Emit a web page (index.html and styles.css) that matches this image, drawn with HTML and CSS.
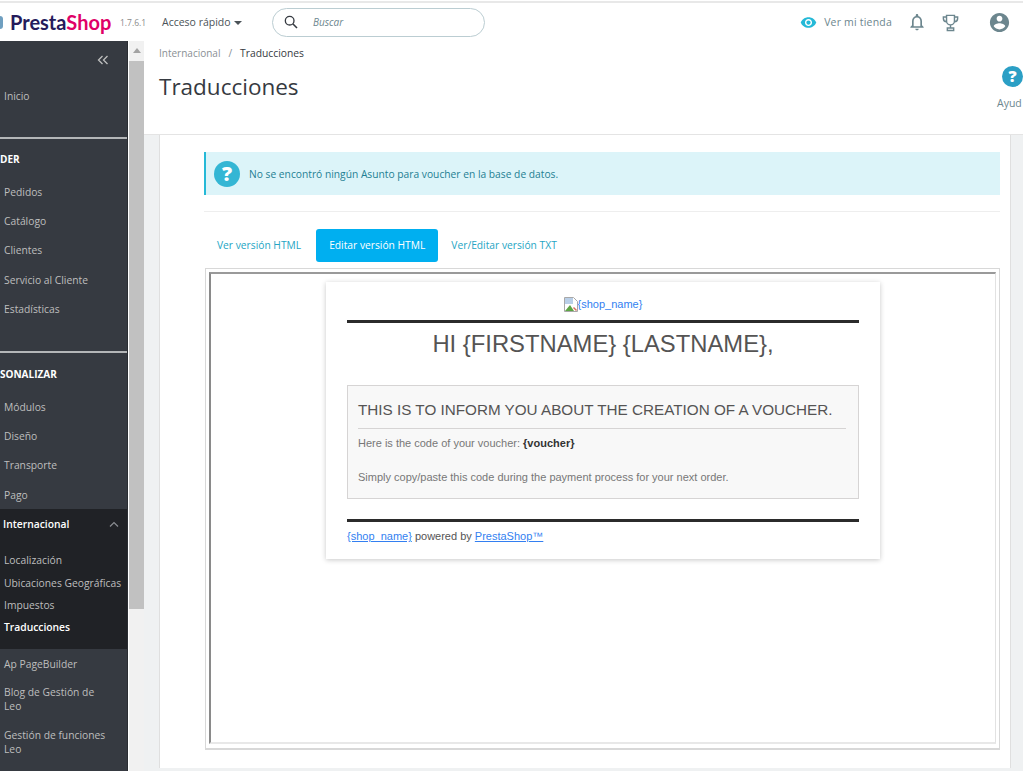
FILE: index.html
```html
<!DOCTYPE html>
<html lang="es">
<head>
    <meta charset="UTF-8">
    <meta name="viewport" content="width=device-width, initial-scale=1.0">
    <title>Traducciones - PrestaShop</title>
    <link rel="stylesheet" href="styles.css">
</head>
<body>
    <header class="topbar">
        <div class="logo">
            <span class="logo-mark"></span>
            <span class="logo-name"><span class="logo-presta">Presta</span><span class="logo-shop">Shop</span></span>
            <span class="version">1.7.6.1</span>
        </div>
        <div class="quick">Acceso rápido <span class="caret"></span></div>
        <div class="search">
            <svg class="search-icon" viewBox="0 0 24 24" width="16" height="16"><circle cx="10" cy="10" r="6.5" fill="none" stroke="#363a41" stroke-width="2"/><path d="M15 15l6 6" stroke="#363a41" stroke-width="2.4" fill="none"/></svg>
            <span class="search-text">Buscar</span>
        </div>
        <div class="top-right">
            <svg class="eye" viewBox="0 0 24 24" width="17" height="17"><path fill="#25b9d7" d="M12 4.5C7 4.5 2.73 7.61 1 12c1.73 4.39 6 7.5 11 7.5s9.27-3.11 11-7.5c-1.73-4.39-6-7.5-11-7.5zM12 17c-2.76 0-5-2.24-5-5s2.24-5 5-5 5 2.24 5 5-2.24 5-5 5zm0-8c-1.66 0-3 1.34-3 3s1.34 3 3 3 3-1.34 3-3-1.34-3-3-3z"/></svg>
            <span class="shop-link">Ver mi tienda</span>
            <svg class="bell" viewBox="0 0 24 24" width="20" height="20"><path fill="#6c868e" d="M12 22c1.1 0 2-.9 2-2h-4c0 1.1.9 2 2 2zm6-6v-5c0-3.07-1.63-5.64-4.5-6.32V4c0-.83-.67-1.5-1.5-1.5s-1.5.67-1.5 1.5v.68C7.64 5.36 6 7.92 6 11v5l-2 2v1h16v-1l-2-2zm-2 1H8v-6c0-2.48 1.51-4.5 4-4.5s4 2.02 4 4.5v6z"/></svg>
            <svg class="trophy" viewBox="0 0 24 24" width="19" height="19"><path fill="none" stroke="#6c868e" stroke-width="1.8" d="M7 3h10v7a5 5 0 0 1-10 0zM7 5H3v2a4 4 0 0 0 4 4M17 5h4v2a4 4 0 0 1-4 4M12 15v3M8 19h8v3H8z"/></svg>
            <svg class="user" viewBox="0 0 24 24" width="23" height="23"><path fill="#6c868e" d="M12 2C6.48 2 2 6.48 2 12s4.48 10 10 10 10-4.48 10-10S17.52 2 12 2zm0 3c1.66 0 3 1.34 3 3s-1.34 3-3 3-3-1.34-3-3 1.34-3 3-3zm0 14.2c-2.5 0-4.71-1.28-6-3.22.03-1.99 4-3.08 6-3.08 1.99 0 5.97 1.09 6 3.08-1.29 1.94-3.5 3.22-6 3.22z"/></svg>
        </div>
    </header>

    <div class="layout">
        <nav class="sidebar">
            <div class="collapse">
                <svg viewBox="0 0 12 10" width="12" height="10"><path fill="none" stroke="#bebebe" stroke-width="1.3" d="M5.5 1L1.5 5l4 4M10.5 1l-4 4 4 4"/></svg>
            </div>
            <a class="nav-item home">Inicio</a>
            <div class="nav-section first">
                <div class="nav-title">DER</div>
                <a class="nav-item">Pedidos</a>
                <a class="nav-item">Catálogo</a>
                <a class="nav-item">Clientes</a>
                <a class="nav-item">Servicio al Cliente</a>
                <a class="nav-item">Estadísticas</a>
            </div>
            <div class="nav-section second">
                <div class="nav-title">SONALIZAR</div>
                <a class="nav-item">Módulos</a>
                <a class="nav-item">Diseño</a>
                <a class="nav-item">Transporte</a>
                <a class="nav-item">Pago</a>
            </div>
            <div class="nav-open">
                <div class="nav-open-head">
                    <span>Internacional</span>
                    <svg viewBox="0 0 10 6" width="10" height="6"><path fill="none" stroke="#8a8d92" stroke-width="1.2" d="M1 5.5l4-4 4 4"/></svg>
                </div>
                <a class="sub-item">Localización</a>
                <a class="sub-item">Ubicaciones Geográficas</a>
                <a class="sub-item">Impuestos</a>
                <a class="sub-item current">Traducciones</a>
            </div>
            <a class="nav-item after-open">Ap PageBuilder</a>
            <a class="nav-item wrap">Blog de Gestión de Leo</a>
            <a class="nav-item wrap">Gestión de funciones Leo</a>
        </nav>

        <div class="scrollbar">
            <div class="scroll-arrow"></div>
            <div class="scroll-thumb"></div>
        </div>

        <main class="content">
            <div class="page-head">
                <div>
                    <div class="breadcrumb"><span>Internacional</span><span class="sep">/</span><span class="crumb-current">Traducciones</span></div>
                    <h1>Traducciones</h1>
                </div>
                <div class="help-box">
                    <span class="q-dot small">?</span>
                    <span class="help-label">Ayud</span>
                </div>
            </div>

            <div class="page-body">
                <div class="card">
                    <div class="alert">
                        <span class="q-dot">?</span>
                        <span>No se encontró ningún Asunto para voucher en la base de datos.</span>
                    </div>
                    <ul class="tabs">
                        <li class="first-tab">Ver versión HTML</li>
                        <li class="active">Editar versión HTML</li>
                        <li>Ver/Editar versión TXT</li>
                    </ul>
                    <div class="frame">
                        <div class="frame-inner">
                            <div class="mail">
                                <div class="mail-logo">
                                    <svg viewBox="0 0 14 15" width="14" height="15"><path fill="#fff" stroke="#a8a8a8" d="M.5.5h9l4 4v10H.5z"/><path fill="#b9cfe8" d="M1 1h8v6H1z"/><path fill="#5da544" d="M1 14l5-6 4 6z"/><path fill="#d9695f" d="M10 10l3 3-1 1-3-3z"/></svg><a>{shop_name}</a>
                                </div>
                                <div class="mail-rule"></div>
                                <h2>HI {FIRSTNAME} {LASTNAME},</h2>
                                <div class="mail-box">
                                    <h3>THIS IS TO INFORM YOU ABOUT THE CREATION OF A VOUCHER.</h3>
                                    <p class="code-line">Here is the code of your voucher: <b>{voucher}</b></p>
                                    <p>Simply copy/paste this code during the payment process for your next order.</p>
                                </div>
                                <div class="mail-rule"></div>
                                <div class="mail-foot"><a>{shop_name}</a> powered by <a>PrestaShop™</a></div>
                            </div>
                        </div>
                    </div>
                </div>
            </div>
        </main>
    </div>
</body>
</html>
```

FILE: styles.css
```css
* {
    box-sizing: border-box;
}
html, body {
    margin: 0;
    height: 771px;
    overflow: hidden;
}
body {
    font-family: 'Open Sans', sans-serif;
    background-color: #fff;
    color: #363a41;
    display: flex;
    flex-direction: column;
}

/* top bar */
.topbar {
    height: 40px;
    flex: none;
    display: flex;
    align-items: center;
    border-top: 2px solid #e8e8e8;
    margin-top: 1px;
}
.logo {
    width: 162px;
    display: flex;
    align-items: center;
}
.logo-mark {
    width: 3px;
    height: 13px;
    background-color: #6f9fc0;
    border-radius: 0 3px 3px 0;
    margin-right: 7px;
}
.logo-name {
    font-family: 'Lato', sans-serif;
    font-size: 20px;
    font-weight: 700;
    width: 110px;
}
.logo-presta {
    color: #251b5b;
}
.logo-shop {
    color: #df0067;
}
.version {
    font-size: 8.5px;
    color: #8a8a8a;
}
.quick {
    width: 110px;
    font-size: 10.5px;
    color: #4b5358;
}
.caret {
    display: inline-block;
    border-top: 4px solid #4b5358;
    border-left: 4px solid transparent;
    border-right: 4px solid transparent;
    vertical-align: middle;
    margin-left: 1px;
}
.search {
    width: 213px;
    height: 29px;
    border: 1px solid #bbcdd2;
    border-radius: 15px;
    display: flex;
    align-items: center;
    padding-left: 10px;
}
.search-text {
    font-size: 10px;
    font-style: italic;
    color: #6c868e;
    margin-left: 14px;
}
.top-right {
    margin-left: auto;
    display: flex;
    align-items: center;
    padding-right: 12px;
}
.shop-link {
    font-size: 10.5px;
    color: #6c868e;
    margin-left: 7px;
    margin-right: 15px;
    letter-spacing: 0.2px;
}
.trophy {
    margin-left: 14px;
}
.user {
    margin-left: 28px;
}

/* sidebar */
.layout {
    flex: 1;
    display: flex;
    min-height: 0;
}
.sidebar {
    width: 128px;
    flex: none;
    background-color: #363a41;
    border-right: 1px solid #2a2d32;
}
.sidebar a {
    display: block;
}
.collapse {
    height: 38px;
    display: flex;
    justify-content: flex-end;
    align-items: center;
    padding-right: 18px;
}
.nav-item {
    font-size: 10.3px;
    line-height: 14px;
    color: #bebebe;
    padding: 7.7px 17px 7.7px 4px;
}
.nav-item.home {
    padding-top: 10px;
    padding-bottom: 0;
}
.nav-section {
    border-top: 2px solid #b4b6b8;
}
.nav-section.first {
    margin-top: 34px;
    padding-bottom: 27px;
    padding-top: 13px;
}
.nav-section.second {
    padding-top: 14px;
}
.nav-title {
    font-size: 10px;
    font-weight: 700;
    line-height: 14px;
    color: #fff;
    margin-bottom: 11px;
}
.nav-open {
    background-color: #202226;
    height: 140px;
    padding-top: 8px;
}
.nav-open-head {
    display: flex;
    align-items: center;
    justify-content: space-between;
    font-size: 10.3px;
    font-weight: 600;
    line-height: 14px;
    color: #fff;
    padding: 0 8px 0 3px;
    margin-bottom: 22px;
}
.sub-item {
    font-size: 10.3px;
    line-height: 14px;
    color: #bebebe;
    padding-left: 4px;
    margin-bottom: 8.3px;
    white-space: nowrap;
}
.sub-item.current {
    color: #fff;
    font-weight: 600;
}
.nav-item.wrap {
    padding-top: 6px;
    padding-bottom: 9px;
}

/* fake browser scrollbar */
.scrollbar {
    width: 15px;
    flex: none;
    background-color: #f1f1f1;
    margin-left: 1px;
}
.scroll-arrow {
    height: 20px;
    padding-top: 7px;
}
.scroll-arrow::after {
    content: "";
    display: block;
    width: 0;
    margin: 0 auto;
    border-bottom: 5px solid #a3a3a3;
    border-left: 4px solid transparent;
    border-right: 4px solid transparent;
}
.scroll-thumb {
    height: 548px;
    background-color: #c1c1c1;
}

/* content */
.content {
    flex: 1;
    min-width: 0;
    display: flex;
    flex-direction: column;
}
.page-head {
    height: 94px;
    flex: none;
    display: flex;
    justify-content: space-between;
    border-bottom: 1px solid #e4e4e4;
    padding-left: 15px;
    overflow: hidden;
}
.breadcrumb {
    font-size: 10px;
    line-height: 14px;
    color: #8a8f94;
    padding-top: 5px;
}
.breadcrumb .sep {
    margin: 0 8px;
}
.crumb-current {
    color: #363a41;
    font-size: 10.3px;
}
h1 {
    font-size: 22.5px;
    font-weight: 400;
    line-height: 32px;
    margin: 11px 0 0;
    color: #363a41;
}
.help-box {
    width: 26px;
    flex: none;
    padding-top: 25px;
    white-space: nowrap;
}
.help-label {
    display: block;
    font-size: 10.5px;
    color: #6c868e;
    margin-top: 9px;
}
.q-dot {
    width: 26px;
    height: 26px;
    flex: none;
    border-radius: 50%;
    background-color: #34b6d4;
    color: #fff;
    font-size: 20px;
    font-weight: 800;
    line-height: 26px;
    text-align: center;
}
.q-dot.small {
    display: block;
    width: 21px;
    height: 21px;
    font-size: 16px;
    line-height: 21px;
    margin-left: 5px;
    background-color: #2b9fc5;
}
.page-body {
    flex: 1;
    background-color: #eff1f2;
    padding: 0 12px 3px 15px;
    min-height: 0;
}
.card {
    height: 100%;
    background-color: #fff;
    border-left: 1px solid #dfdfdf;
    border-right: 1px solid #dfdfdf;
    padding: 17px 10px 0 44px;
}
.alert {
    height: 43px;
    display: flex;
    align-items: center;
    gap: 9px;
    background-color: #dcf4f9;
    border-left: 2px solid #25b9d7;
    padding-left: 8px;
    font-size: 10.25px;
    color: #1e7f93;
}
.tabs {
    list-style: none;
    margin: 16px 0 6px;
    padding: 17px 0 0;
    display: flex;
    height: 51px;
    border-top: 1px solid #eee;
    font-size: 10.25px;
    color: #25a5c4;
}
.tabs li {
    padding: 0 13px;
    line-height: 33px;
    height: 33px;
    border-radius: 3px;
}
.tabs li.first-tab {
    padding-right: 15px;
}
.tabs li.active {
    background-color: #00aff0;
    color: #fff;
    font-weight: 500;
}
.frame {
    height: 482px;
    margin-left: 1px;
    border: 1px solid #d8d8d8;
    border-bottom-width: 2px;
    padding: 3px;
}
.frame-inner {
    height: 472px;
    border-top: 2px solid #9a9a9a;
    border-left: 2px solid #8a8a8a;
    border-right: 1px solid #e2e2e2;
    border-bottom: 2px solid #e8e8e8;
    padding-top: 8px;
}

/* mail preview */
.mail {
    width: 554px;
    height: 277px;
    margin-left: 115px;
    background-color: #fff;
    box-shadow: 0 1px 5px rgba(0, 0, 0, 0.22);
    padding: 14px 21px 0;
    font-family: 'Liberation Sans', Arial, sans-serif;
    color: #555454;
}
.mail a {
    color: #337ff1;
}
.mail-logo {
    height: 24px;
    padding-bottom: 8px;
    display: flex;
    justify-content: center;
    align-items: center;
    font-size: 11px;
}
.mail-rule {
    height: 3px;
    background-color: #2b2b2b;
}
h2 {
    font-size: 23.8px;
    font-weight: 400;
    line-height: 42px;
    margin: 0 0 20px;
    text-align: center;
}
.mail-box {
    height: 114px;
    background-color: #f8f8f8;
    border: 1px solid #d6d4d4;
    padding: 0 12px 0 10px;
    margin-bottom: 20px;
    font-size: 11px;
}
h3 {
    font-size: 15.25px;
    font-weight: 400;
    line-height: 18px;
    height: 43px;
    padding-top: 15px;
    margin: 0;
    border-bottom: 1px solid #d6d4d4;
    white-space: nowrap;
}
.mail-box p {
    margin: 0;
    line-height: 14px;
    color: #777;
}
.mail-box p.code-line {
    margin: 7px 0 20px;
}
.mail-box b {
    color: #333;
}
.mail-foot {
    font-size: 11px;
    margin-top: 8px;
}
.mail-foot a {
    text-decoration: underline;
}
```
